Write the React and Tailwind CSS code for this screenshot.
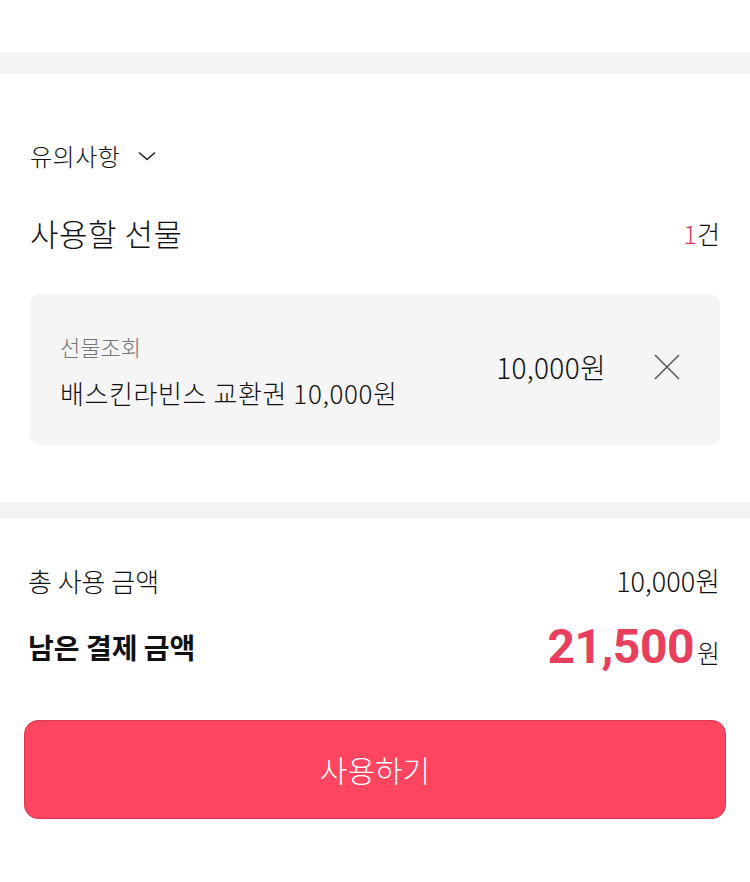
export default function App() {
  return (
    <div
      className="w-[750px] h-[882px] bg-white text-[#111] overflow-hidden"
      style={{ fontFamily: '"Noto Sans CJK KR", "Noto Sans", sans-serif' }}
    >
      <div className="h-[53px]" />
      <div className="h-[20px] bg-[#f4f4f4]" />

      <div className="px-[30px]">
        <div className="mt-[64px] flex items-center gap-[18px]">
          <span className="text-[24px] leading-[38px] font-light tracking-[0.5px]">유의사항</span>
          <svg width="18" height="10" viewBox="0 0 18 10" fill="none" stroke="#222" strokeWidth="1.6">
            <path d="M1 1.5l8 7 8-7" />
          </svg>
        </div>

        <div className="mt-[38px] flex items-center justify-between">
          <span className="text-[31px] leading-[40px] font-light tracking-[0.5px]">사용할 선물</span>
          <span className="text-[25px] leading-[40px] font-light">
            <span className="text-[#d4365a]">1</span>건
          </span>
        </div>

        <div className="mt-[41px] h-[151px] rounded-[10px] bg-[#f5f5f5] flex items-center pl-[30px] pr-[40px]">
          <div className="flex-1 flex flex-col">
            <span className="text-[22px] leading-[30px] text-[#777] font-light">선물조회</span>
            <span className="mt-[16px] text-[26px] leading-[32px] font-light tracking-[0.6px]">배스킨라빈스 교환권 10,000원</span>
          </div>
          <span className="text-[28px] leading-[32px] font-light -mt-[6px] tracking-[0.3px]">10,000원</span>
          <svg className="ml-[48px] -mt-[6px]" width="26" height="26" viewBox="0 0 26 26" fill="none" stroke="#555" strokeWidth="1.5">
            <path d="M1 1l24 24M25 1L1 25" />
          </svg>
        </div>
      </div>

      <div className="mt-[58px] h-[16px] bg-[#f4f4f4]" />

      <div className="pl-[28px] pr-[30px]">
        <div className="mt-[45px] flex items-center justify-between">
          <span className="text-[26px] leading-[34px] font-light">총 사용 금액</span>
          <span className="text-[27px] leading-[34px] font-light">10,000원</span>
        </div>
        <div className="mt-[23px] flex items-center justify-between">
          <span className="text-[28px] leading-[40px] font-bold">남은 결제 금액</span>
          <span className="flex items-baseline">
            <span className="text-[48px] leading-[52px] font-bold tracking-[-0.5px] text-[#e8405c]" style={{ fontFamily: 'Roboto, "Liberation Sans", sans-serif' }}>21,500</span>
            <span className="text-[25px] font-light ml-[3px]">원</span>
          </span>
        </div>
      </div>

      <div className="px-[24px] mt-[47px]">
        <button className="w-full h-[99px] rounded-[14px] bg-[#ff4560] border border-[#d63b52] text-white text-[30px] font-light flex items-center justify-center">
          사용하기
        </button>
      </div>
    </div>
  );
}
